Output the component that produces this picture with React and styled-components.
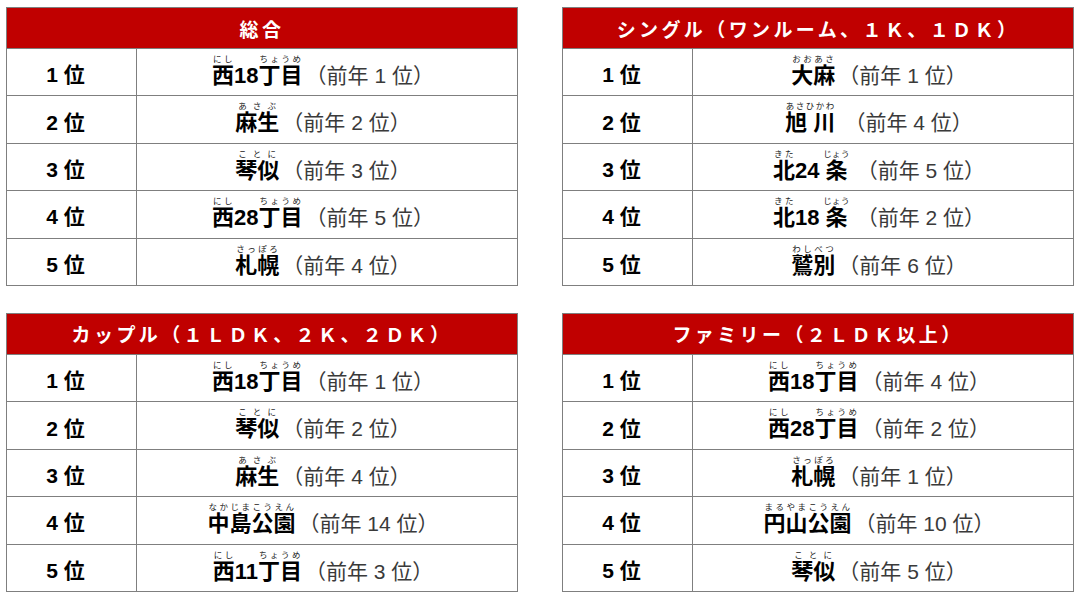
import React from 'react';
import styled, { createGlobalStyle } from 'styled-components';

const GlobalStyle = createGlobalStyle`
  html, body {
    margin: 0;
    padding: 0;
    background: #ffffff;
  }
  body {
    font-family: "Liberation Sans", "Noto Sans CJK JP", sans-serif;
    color: #000;
  }
`;

const Page = styled.div`
  display: grid;
  grid-template-columns: 512px 512px;
  align-items: start;
  align-content: start;
  column-gap: 44px;
  row-gap: 27px;
  padding: 7px 0 0 6px;
  width: 1080px;
  height: 597px;
  box-sizing: border-box;
`;

const Table = styled.table`
  width: 512px;
  border-collapse: collapse;
  table-layout: fixed;
`;

const RankCol = styled.col`
  width: 130px;
`;

const HeadCell = styled.th`
  height: 40px;
  padding: 0;
  background: #c00000;
  color: #fff;
  border: 1px solid #7f7f7f;
  font-family: "Noto Sans CJK JP", sans-serif;
  font-size: 19px;
  font-weight: 700;
  letter-spacing: 3.4px;
  text-align: center;
  vertical-align: middle;
  line-height: 1;
`;

const Row = styled.tr`
  height: 47.4px;
`;

const RankCell = styled.td`
  padding: 5px 12px 0 0;
  border: 1px solid #7f7f7f;
  text-align: center;
  vertical-align: middle;
  font-size: 21px;
  font-weight: 700;
  line-height: 1;
`;

const NameCell = styled.td`
  padding: 0;
  border: 1px solid #7f7f7f;
  vertical-align: top;
`;

const NameBox = styled.div`
  height: 44px;
  box-sizing: border-box;
  padding: 16px 8px 0 0;
  text-align: center;
  line-height: 1;
  white-space: nowrap;
  overflow: visible;
`;

const Place = styled.span`
  font-size: 22px;
  font-weight: 700;
  color: #000;

  ruby {
    ruby-position: over;
  }
  rt {
    position: relative;
    top: 1px;
    font-family: "Noto Sans CJK JP", sans-serif;
    font-size: 8.5px;
    font-weight: 400;
    color: #222;
    letter-spacing: 0.4px;
    line-height: 1;
  }
`;

const Prev = styled.span`
  font-size: 21px;
  font-weight: 400;
  color: #3a3a3a;
  margin-left: 3px;
`;

const Name = ({ parts }) => (
  <Place>
    {parts.map((p, i) =>
      typeof p === 'string' ? (
        <React.Fragment key={i}>{p}</React.Fragment>
      ) : (
        <ruby key={i}>
          {p[0]}
          <rt>{p[1]}</rt>
        </ruby>
      )
    )}
  </Place>
);

const nishi = (n) => [['西', 'にし'], n, ['丁目', 'ちょうめ']];
const kita = (n) => [['北', 'きた'], n + ' ', ['条', 'じょう'], ' '];

const tables = [
  {
    title: '総合',
    rows: [
      [nishi('18'), '1'],
      [[['麻生', 'あさぶ']], '2'],
      [[['琴似', 'ことに']], '3'],
      [nishi('28'), '5'],
      [[['札幌', 'さっぽろ']], '4'],
    ],
  },
  {
    title: 'シングル（ワンルーム、１Ｋ、１ＤＫ）',
    rows: [
      [[['大麻', 'おおあさ']], '1'],
      [[['旭 川', 'あさひかわ'], ' '], '4'],
      [kita('24'), '5'],
      [kita('18'), '2'],
      [[['鷲別', 'わしべつ']], '6'],
    ],
  },
  {
    title: 'カップル（１ＬＤＫ、２Ｋ、２ＤＫ）',
    rows: [
      [nishi('18'), '1'],
      [[['琴似', 'ことに']], '2'],
      [[['麻生', 'あさぶ']], '4'],
      [[['中島公園', 'なかじまこうえん']], '14'],
      [nishi('11'), '3'],
    ],
  },
  {
    title: 'ファミリー（２ＬＤＫ以上）',
    rows: [
      [nishi('18'), '4'],
      [nishi('28'), '2'],
      [[['札幌', 'さっぽろ']], '1'],
      [[['円山公園', 'まるやまこうえん']], '10'],
      [[['琴似', 'ことに']], '5'],
    ],
  },
];

function RankTable({ title, rows }) {
  return (
    <Table>
      <colgroup>
        <RankCol />
        <col />
      </colgroup>
      <thead>
        <tr>
          <HeadCell colSpan={2}>{title}</HeadCell>
        </tr>
      </thead>
      <tbody>
        {rows.map(([parts, prev], i) => (
          <Row key={i}>
            <RankCell>{i + 1} 位</RankCell>
            <NameCell>
              <NameBox>
                <Name parts={parts} />
                <Prev>（前年 {prev} 位）</Prev>
              </NameBox>
            </NameCell>
          </Row>
        ))}
      </tbody>
    </Table>
  );
}

export default function App() {
  return (
    <>
      <GlobalStyle />
      <Page>
        {tables.map((t) => (
          <RankTable key={t.title} title={t.title} rows={t.rows} />
        ))}
      </Page>
    </>
  );
}
